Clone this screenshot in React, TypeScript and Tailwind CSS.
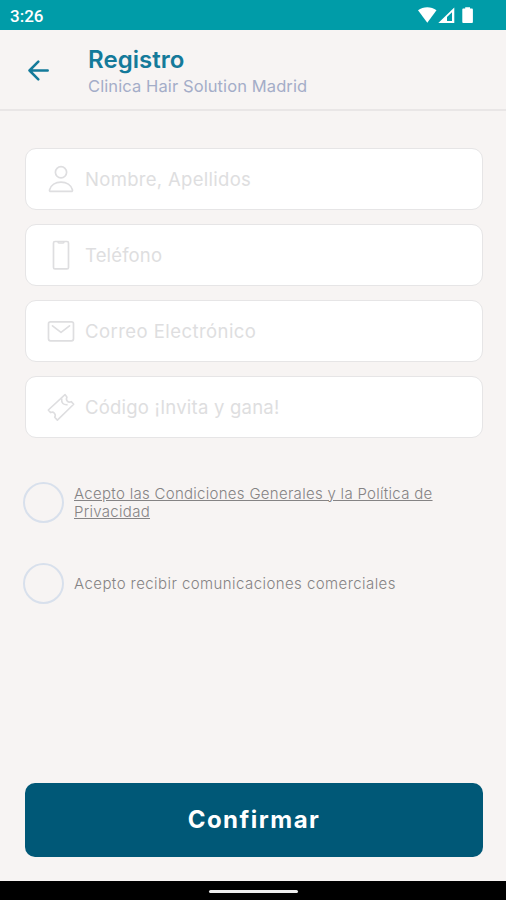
import React from 'react';

interface FieldItem {
  label: string;
  spacing: string;
  icon: React.ReactNode;
}

interface FieldProps {
  field: FieldItem;
}

interface ConsentProps {
  spacing: string;
  children: React.ReactNode;
}

const fields: FieldItem[] = [
  {
    label: 'Nombre, Apellidos',
    spacing: 'tracking-[0.3px]',
    icon: (
      <svg
        className="h-8 w-8"
        fill="none"
        stroke="currentColor"
        strokeLinejoin="round"
        strokeWidth="1.7"
        viewBox="0 0 32 32"
      >
        <circle cx="16" cy="9.3" r="5.6" />
        <path d="M5.8 28.4c-1.1 0-1.5-.7-1.2-1.7C5.9 22.2 10.5 19.2 16 19.2s10.1 3 11.400 7.500c.3 1-.1 1.700-1.200 1.700z" />
      </svg>
    ),
  },
  {
    label: 'Teléfono',
    spacing: 'tracking-[0.15px]',
    icon: (
      <svg
        className="h-8 w-8"
        fill="none"
        stroke="currentColor"
        strokeWidth="1.7"
        viewBox="0 0 32 32"
      >
        <rect x="8.5" y="2.5" width="15" height="27.4" rx="1.5" />
        <path d="M13 2.700c.2.9.6 1.300 1.300 1.300h3.400c.7 0 1.100-.4 1.300-1.300" />
      </svg>
    ),
  },
  {
    label: 'Correo Electrónico',
    spacing: 'tracking-[0.44px]',
    icon: (
      <svg
        className="h-8 w-8"
        fill="none"
        stroke="currentColor"
        strokeLinecap="round"
        strokeLinejoin="round"
        strokeWidth="1.7"
        viewBox="0 0 32 32"
      >
        <rect x="3.5" y="6.800" width="25" height="19" rx="2" />
        <path d="M7.5 10.800l8.500 6.600 8.500-6.600" />
      </svg>
    ),
  },
  {
    label: 'Código ¡Invita y gana!',
    spacing: 'tracking-[0.22px]',
    icon: (
      <svg
        className="h-8 w-8"
        fill="none"
        stroke="currentColor"
        strokeLinejoin="round"
        strokeWidth="1.6"
        viewBox="0 0 32 32"
      >
        <path d="M20 3.600L3.300 19l2.200 2.600c1.500-.7 3-.4 3.900.6 1 1.100 1.100 2.700.3 4l2.700 2.900 16.300-15.800-2.500-2.700c-1.400.7-2.900.5-3.900-.5s-1.100-2.500-.3-3.900z" />
        <path d="M16.700 7.500c-.3 2.400 0 3.900 1.200 5s2.600 1.400 4.700 1.100" />
      </svg>
    ),
  },
];

const StatusBar: React.FC = () => (
  <div className="flex h-[30px] items-center justify-between bg-[#009ca8] pr-[31px] pl-[10px] text-white">
    <span className="pt-[2px] font-['Roboto',sans-serif] text-[17px] leading-none font-medium">
      3:26
    </span>
    <svg className="h-[18px] w-[57px]" fill="currentColor" viewBox="0 0 57 18">
      <path d="M0 4.300C5.200.3 13.300.3 18.500 4.300L9.300 16.700z" />
      <path
        d="M20.300 17L36.300 1.500V17zM34 6.200l-5 4.800v4h5z"
        fillRule="evenodd"
      />
      <path d="M44.300 3.800c0-.8.4-1.200 1.200-1.200h1.700V1.300h4.800v1.300h1.700c.8 0 1.200.4 1.200 1.200v12c0 .8-.4 1.200-1.200 1.200h-8.200c-.8 0-1.200-.4-1.200-1.200z" />
    </svg>
  </div>
);

const Header: React.FC = () => (
  <header className="flex h-[81px] border-b-2 border-[#e9e6e6] pl-7">
    <svg
      aria-label="Volver"
      className="mt-[30px] h-[21px] w-[21px] text-[#147a9a]"
      fill="none"
      stroke="currentColor"
      strokeLinecap="round"
      strokeLinejoin="round"
      strokeWidth="2.5"
      viewBox="0 0 21 21"
    >
      <path d="M19.700 10.500H1.500M10.300 1.700l-8.800 8.800 8.800 8.800" />
    </svg>
    <div className="ml-[39px] whitespace-nowrap">
      <h1 className="mt-[16px] text-[24px] leading-7 font-semibold tracking-[0.05px] text-[#147a9a]">
        Registro
      </h1>
      <p className="text-[16.5px] leading-6 tracking-[0.1px] text-[#a4adc8]">
        Clinica Hair Solution Madrid
      </p>
    </div>
  </header>
);

const Field: React.FC<FieldProps> = ({ field }) => (
  <div className="flex h-[62px] items-center rounded-[11px] border-[1.5px] border-[#e6e5e6] bg-white pl-[19px] text-[#dedee0]">
    {field.icon}
    <span
      className={`ml-[8px] text-[18.5px] leading-6 font-normal whitespace-nowrap ${field.spacing}`}
    >
      {field.label}
    </span>
  </div>
);

const Consent: React.FC<ConsentProps> = ({ spacing, children }) => (
  <div className="flex h-[41px] items-center">
    <span className="h-[41px] w-[41px] shrink-0 rounded-full border-2 border-[#d8e0ec]" />
    <p
      className={`ml-[10px] text-[15px] leading-[18px] font-light whitespace-nowrap text-[#858384] ${spacing}`}
    >
      {children}
    </p>
  </div>
);

const App: React.FC = () => (
  <div className="flex h-[900px] w-[506px] flex-col overflow-hidden bg-[#f7f4f3] font-['Inter',sans-serif]">
    <StatusBar />
    <Header />
    <main className="flex flex-1 flex-col">
      <div className="mt-[37px] flex flex-col gap-[14px] pr-[23px] pl-[25px]">
        {fields.map((field) => (
          <Field key={field.label} field={field} />
        ))}
      </div>
      <div className="mt-[44px] flex flex-col gap-10 pl-[23px]">
        <Consent spacing="tracking-[0.29px]">
          <span className="underline">
            Acepto las Condiciones Generales y la Política de
            <br />
            Privacidad
          </span>
        </Consent>
        <Consent spacing="tracking-[0.43px]">
          Acepto recibir comunicaciones comerciales
        </Consent>
      </div>
      <button className="mt-auto mr-[23px] mb-6 ml-[25px] h-[74px] rounded-[10px] bg-[#005877] text-[24px] font-bold tracking-[1.5px] text-white">
        Confirmar
      </button>
    </main>
    <div className="flex h-[19px] items-center justify-center bg-black pt-[2px]">
      <span className="h-[3px] w-[89px] rounded-full bg-[#eeeeee]" />
    </div>
  </div>
);

export default App;
